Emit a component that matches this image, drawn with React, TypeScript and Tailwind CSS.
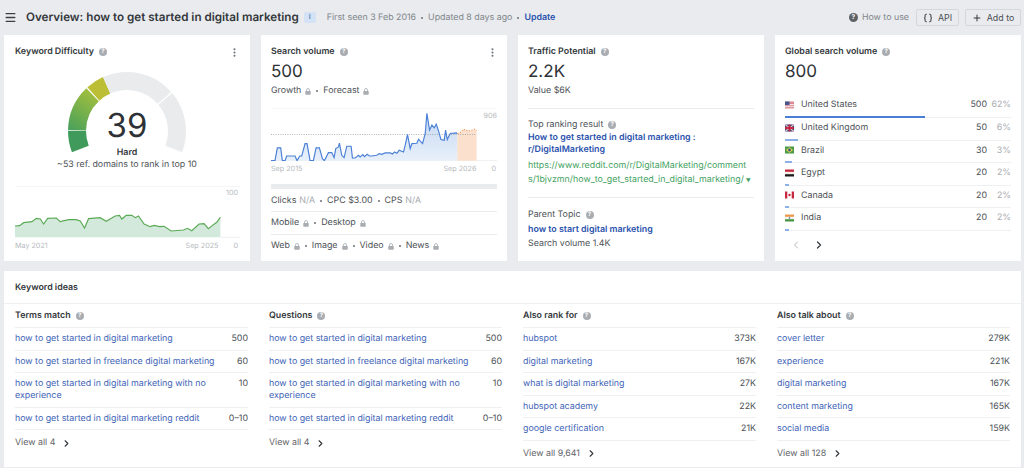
import { ChevronLeft, ChevronRight, Menu, Plus, EllipsisVertical, Braces } from "lucide-react";

const font = { fontFamily: '"Inter", "Noto Sans", sans-serif' };

const kdLine =
  "44,679 58,678 70,669 95,666 108,656 120,658 130,673 142,656 168,655 180,666 205,660 228,660 240,664 253,685 265,657 300,654 318,665 345,649 358,647 365,658 378,647 395,647 405,654 415,649 432,673 450,681 462,677 478,681 492,680 513,694 550,691 562,686 575,693 597,673 612,672 625,687 640,675 650,668 661,653";

const volumeLine =
  "28,206 40,206 47,168 57,168 62,206 70,206 75,192 100,192 106,206 114,192 120,192 130,155 136,155 145,206 155,206 163,168 173,168 182,200 188,206 200,182 210,182 217,197 222,170 230,165 233,154 240,190 247,197 255,163 268,163 272,198 280,198 290,190 295,195 303,188 308,194 316,187 323,192 330,192 345,190 352,185 360,187 370,183 385,183 392,186 398,180 405,184 412,175 425,180 430,160 437,128 445,170 450,155 465,154 470,142 482,155 490,125 495,65 503,115 510,100 517,108 523,97 530,118 537,143 547,145 551,115 556,143 565,125 583,123 586,125";

const forecastLine = "586,125 595,122 605,112 615,116 625,117 638,112 644,116";

const termsRows = [
  { name: "how to get started in digital marketing", value: "500" },
  { name: "how to get started in freelance digital marketing", value: "60" },
  { name: "how to get started in digital marketing with no experience", value: "10" },
  { name: "how to get started in digital marketing reddit", value: "0–10" },
];

const columns = [
  { title: "Terms match", rows: termsRows, more: "View all 4" },
  { title: "Questions", rows: termsRows, more: "View all 4" },
  {
    title: "Also rank for",
    more: "View all 9,641",
    rows: [
      { name: "hubspot", value: "373K" },
      { name: "digital marketing", value: "167K" },
      { name: "what is digital marketing", value: "27K" },
      { name: "hubspot academy", value: "22K" },
      { name: "google certification", value: "21K" },
    ],
  },
  {
    title: "Also talk about",
    more: "View all 128",
    rows: [
      { name: "cover letter", value: "279K" },
      { name: "experience", value: "221K" },
      { name: "digital marketing", value: "167K" },
      { name: "content marketing", value: "165K" },
      { name: "social media", value: "159K" },
    ],
  },
];

function Flag({ code }: { code: string }) {
  return (
    <svg width="9" height="8" viewBox="0 0 9 8" className="shrink-0">
      {code === "us" && (
        <>
          <rect width="9" height="7" y="0.5" fill="#d98a94" />
          <rect width="9" height="1.2" y="3" fill="#f3e3e5" />
          <rect width="9" height="1" y="5.2" fill="#f3e3e5" />
          <rect width="4.5" height="3.5" y="0.5" fill="#47558f" />
        </>
      )}
      {code === "uk" && (
        <>
          <rect width="9" height="7" y="0.5" fill="#39437f" />
          <path d="M0 .5 9 7.5M9 .5 0 7.5" stroke="#e8c5cb" strokeWidth="1.2" />
          <path d="M4.5 .5V7.5M0 4H9" stroke="#c8283f" strokeWidth="1.8" />
        </>
      )}
      {code === "br" && (
        <>
          <rect width="9" height="7" y="0.5" fill="#4b9a48" />
          <path d="M4.5 1.2 8 4 4.5 6.8 1 4Z" fill="#e5d651" />
          <circle cx="4.5" cy="4" r="1.4" fill="#38508f" />
        </>
      )}
      {code === "eg" && (
        <>
          <rect width="9" height="2.4" y="0.5" fill="#c8283f" />
          <rect width="9" height="2.3" y="2.9" fill="#f7efe6" />
          <rect width="9" height="2.3" y="5.2" fill="#1c1c1c" />
        </>
      )}
      {code === "ca" && (
        <>
          <rect width="9" height="7" y="0.5" fill="#fff" />
          <rect width="2.3" height="7" y="0.5" fill="#c8283f" />
          <rect width="2.3" height="7" x="6.7" y="0.5" fill="#c8283f" />
          <circle cx="4.5" cy="4" r="1.2" fill="#c8283f" />
        </>
      )}
      {code === "in" && (
        <>
          <rect width="9" height="2.4" y="0.5" fill="#eb9a4c" />
          <rect width="9" height="2.3" y="2.9" fill="#f5f5f5" />
          <rect width="9" height="2.3" y="5.2" fill="#45963f" />
          <circle cx="4.5" cy="4" r="0.8" fill="#47558f" />
        </>
      )}
    </svg>
  );
}

const countries = [
  { code: "us", name: "United States", volume: "500", share: "62%", bar: "w-[140px]", barColor: "bg-[#4a7fd6]" },
  { code: "uk", name: "United Kingdom", volume: "50", share: "6%", bar: "w-[13px]", barColor: "bg-[#8db0e8]" },
  { code: "br", name: "Brazil", volume: "30", share: "3%", bar: "w-[7px]", barColor: "bg-[#8db0e8]" },
  { code: "eg", name: "Egypt", volume: "20", share: "2%", bar: "w-[4px]", barColor: "bg-[#8db0e8]" },
  { code: "ca", name: "Canada", volume: "20", share: "2%", bar: "w-[4px]", barColor: "bg-[#8db0e8]" },
  { code: "in", name: "India", volume: "20", share: "2%", bar: "w-[4px]", barColor: "bg-[#8db0e8]" },
];

function Help() {
  return (
    <span className="ml-[5px] inline-flex h-[8px] w-[8px] shrink-0 items-center justify-center rounded-full bg-[#a9adb2] text-[6px] font-bold leading-none text-white">
      ?
    </span>
  );
}

function Lock() {
  return (
    <svg width="6" height="7" viewBox="0 0 6 7" className="ml-[4px] inline-block shrink-0">
      <path d="M1.5 3V2a1.5 1.5 0 0 1 3 0v1" fill="none" stroke="#a9adb2" strokeWidth="0.8" />
      <rect x="0.3" y="3" width="5.4" height="3.7" rx="0.6" fill="#a9adb2" />
    </svg>
  );
}

function Dot() {
  return <span className="mx-[5px] h-[2px] w-[2px] shrink-0 rounded-full bg-[#6b7075]" />;
}

function CardTitle({ children, menu }: { children: string; menu?: boolean }) {
  return (
    <div className="flex h-[14px] items-center justify-between">
      <div className="flex items-center text-[8.85px] font-semibold text-[#33373b]">
        {children}
        <Help />
      </div>
      {menu && <EllipsisVertical size={11} className="mr-[-0.5px] text-[#6b7075]" strokeWidth={2.4} />}
    </div>
  );
}

function Gauge() {
  const point = (deg: number, r: number) => {
    const a = (deg * Math.PI) / 180;
    return `${127 - r * Math.cos(a)} ${131 - r * Math.sin(a)}`;
  };
  const arc = (from: number, to: number) => {
    const large = to - from > 180 ? 1 : 0;
    return `M${point(from, 59)} A59 59 0 ${large} 1 ${point(to, 59)} L${point(to, 41)} A41 41 0 ${large} 0 ${point(from, 41)} Z`;
  };
  return (
    <svg width="136" height="92" viewBox="59 68 136 92" className="block">
      <defs>
        <linearGradient id="kdGreen" x1="0" y1="1" x2="0.5" y2="0">
          <stop offset="0" stopColor="#46a05c" />
          <stop offset="1" stopColor="#9dbd3f" />
        </linearGradient>
      </defs>
      <path d={arc(-21, 0)} fill="#3f9a5c" />
      <path d={arc(0.8, 46.5)} fill="url(#kdGreen)" />
      <path d={arc(47.8, 66)} fill="#bcbf36" />
      <path d={arc(66, 138.5)} fill="#e9ebed" />
      <path d={arc(140, 201)} fill="#e9ebed" />
    </svg>
  );
}

function DifficultyCard() {
  return (
    <div className="relative flex flex-col bg-white px-[11px] pt-[10px]">
      <CardTitle menu>Keyword Difficulty</CardTitle>
      <div className="relative mt-[9px] flex h-[92px] justify-center">
        <Gauge />
        <span className="absolute left-0 right-0 top-[37px] text-center text-[33px] leading-[40px] text-[#2e3236]">39</span>
      </div>
      <div className="mt-[-13px] text-center text-[8.85px] font-semibold leading-[12px] text-[#33373b]">Hard</div>
      <div className="text-center text-[8.85px] leading-[12px] text-[#4b5055]">~53 ref. domains to rank in top 10</div>
      <div className="relative mt-[15px]">
        <svg width="225" height="52" viewBox="44 559 676 156" preserveAspectRatio="none" className="block">
          <line x1="44" x2="720" y1="560" y2="560" stroke="#eceef0" strokeWidth="2" />
          <line x1="661" x2="720" y1="713" y2="713" stroke="#e4e6e8" strokeWidth="2" />
          <polygon points={`44,713 ${kdLine} 661,713`} fill="#d3e9db" />
          <polyline points={kdLine} fill="none" stroke="#5aaa55" strokeWidth="3.5" />
        </svg>
        <span className="absolute right-[1px] top-[2px] text-[7.2px] leading-[10px] text-[#b6babe]">100</span>
      </div>
      <div className="mt-[3px] flex text-[7.2px] leading-[10px] text-[#b6babe]">
        <span>May 2021</span>
        <span className="ml-auto mr-[15px]">Sep 2025</span>
        <span className="mr-[1px]">0</span>
      </div>
    </div>
  );
}

function VolumeCard() {
  return (
    <div className="flex flex-col bg-white px-[10px] pt-[10px]">
      <CardTitle menu>Search volume</CardTitle>
      <div className="mt-[1px] text-[17px] leading-[24px] text-[#2e3236]">500</div>
      <div className="flex h-[14px] items-center text-[8.85px] text-[#4b5055]">
        Growth
        <Lock />
        <span className="mx-[5px] h-[2px] w-[2px] rounded-full bg-[#6b7075]" />
        Forecast
        <Lock />
      </div>
      <div className="relative mt-[10px]">
        <svg width="226" height="53" viewBox="28 49 677 158" preserveAspectRatio="none" className="block">
          <line x1="28" x2="705" y1="50" y2="50" stroke="#eceef0" strokeWidth="2" />
          <line x1="28" x2="705" y1="206" y2="206" stroke="#e4e6e8" strokeWidth="2" />
          <defs>
            <linearGradient id="volFill" x1="0" y1="0" x2="0" y2="1">
              <stop offset="0" stopColor="#c5d8f2" />
              <stop offset="1" stopColor="#e8f0fa" />
            </linearGradient>
          </defs>
          <polygon points={`28,206 ${volumeLine} 586,206`} fill="url(#volFill)" />
          <polygon points={`${forecastLine} 644,206 586,206`} fill="#fbe1cd" />
          <line x1="28" x2="644" y1="128" y2="128" stroke="#8a8f94" strokeWidth="2" strokeDasharray="3 4" />
          <polyline points={volumeLine} fill="none" stroke="#4a80d6" strokeWidth="3.5" />
          <polyline points={forecastLine} fill="none" stroke="#f0995a" strokeWidth="3" strokeDasharray="4 4" />
        </svg>
        <span className="absolute right-0 top-[3px] text-[7.2px] leading-[10px] text-[#b6babe]">906</span>
      </div>
      <div className="mt-[3px] flex text-[7.2px] leading-[10px] text-[#b6babe]">
        <span>Sep 2015</span>
        <span className="ml-auto mr-[15px]">Sep 2026</span>
        <span className="mr-[1px]">0</span>
      </div>
      <div className="mt-[10px] h-[5px] bg-[#e9ebed]" />
      <div className="flex h-[23px] items-center border-b border-[#e9ebed] pt-[1px] text-[8.85px] text-[#4b5055]">
        Clicks <span className="ml-[3px] text-[#a9adb2]">N/A</span>
        <Dot />
        CPC $3.00
        <Dot />
        CPS <span className="ml-[3px] text-[#a9adb2]">N/A</span>
      </div>
      <div className="flex h-[23px] items-center border-b border-[#e9ebed] text-[8.85px] text-[#4b5055]">
        Mobile
        <Lock />
        <Dot />
        Desktop
        <Lock />
      </div>
      <div className="flex h-[22px] items-center text-[8.85px] text-[#4b5055]">
        Web
        <Lock />
        <Dot />
        Image
        <Lock />
        <Dot />
        Video
        <Lock />
        <Dot />
        News
        <Lock />
      </div>
    </div>
  );
}

function TrafficCard() {
  return (
    <div className="flex flex-col bg-white px-[10px] pt-[10px]">
      <CardTitle>Traffic Potential</CardTitle>
      <div className="mt-[1px] text-[17px] leading-[24px] text-[#2e3236]">2.2K</div>
      <div className="h-[14px] text-[8.85px] leading-[14px] text-[#4b5055]">Value $6K</div>
      <div className="mt-[10px] border-t border-[#e9ebed] pt-[10px]">
        <div className="flex h-[12px] items-center text-[8.85px] text-[#4b5055]">
          Top ranking result
          <Help />
        </div>
        <div className="mt-[1px] text-[8.85px] font-semibold leading-[12px] text-[#2a52ad]">
          How to get started in digital marketing : r/DigitalMarketing
        </div>
        <div className="mt-[2.5px] whitespace-nowrap text-[8.85px] leading-[14px] text-[#3f9f5e]">
          https://www.reddit.com/r/DigitalMarketing/comment
          <br />
          s/1bjvzmn/how_to_get_started_in_digital_marketing/
          <span className="ml-[2px] text-[5px] text-[#3f9f5e]">▼</span>
        </div>
      </div>
      <div className="mt-[9.5px] border-t border-[#e9ebed] pt-[11px]">
        <div className="flex h-[12px] items-center text-[8.85px] text-[#4b5055]">
          Parent Topic
          <Help />
        </div>
        <div className="mt-[3px] text-[8.85px] font-semibold leading-[12px] text-[#2a52ad]">how to start digital marketing</div>
        <div className="mt-[2px] text-[8.85px] leading-[12px] text-[#4b5055]">Search volume 1.4K</div>
      </div>
    </div>
  );
}

function GlobalCard() {
  return (
    <div className="flex flex-col bg-white px-[10px] pt-[10px]">
      <CardTitle>Global search volume</CardTitle>
      <div className="mt-[1px] text-[17px] leading-[24px] text-[#2e3236]">800</div>
      <div className="mt-[11.5px]">
        {countries.map((c) => (
          <div key={c.code} className="relative h-[22.6px] border-b border-[#eef0f2] pb-[3px]">
            <div className="flex h-[19px] items-center text-[8.85px] text-[#4b5055]">
              <Flag code={c.code} />
              <span className="ml-[7px]">{c.name}</span>
              <span className="ml-auto">{c.volume}</span>
              <span className="w-[24px] text-right text-[#a9adb2]">{c.share}</span>
            </div>
            <div className={`absolute bottom-[-1px] left-0 h-[2px] ${c.bar} ${c.barColor}`} />
          </div>
        ))}
      </div>
      <div className="mt-[8px] flex items-center pl-[5px]">
        <ChevronLeft size={12} className="text-[#b6babe]" strokeWidth={2} />
        <ChevronRight size={12} className="ml-[11px] text-[#33373b]" strokeWidth={2.4} />
      </div>
    </div>
  );
}

export default function App() {
  return (
    <div style={font} className="h-[468px] w-[1024px] overflow-hidden bg-[#e9ebee] [text-rendering:geometricPrecision]">
      <header className="flex h-[35px] items-center pl-[4px] pr-[3px]">
        <Menu size={13} className="text-[#3c4045]" strokeWidth={2.4} />
        <h1 className="ml-[9px] text-[11.65px] font-semibold text-[#33373b]">Overview: how to get started in digital marketing</h1>
        <span className="ml-[5px] flex h-[11px] w-[12px] items-center justify-center rounded-[2px] bg-[#d3e2f5] text-[7px] font-bold text-[#6a8fc4]">I</span>
        <span className="ml-[11px] text-[8.85px] text-[#80858a]">First seen 3 Feb 2016</span>
        <span className="mx-[5px] h-[2px] w-[2px] rounded-full bg-[#6b7075]" />
        <span className="text-[8.85px] text-[#80858a]">Updated 8 days ago</span>
        <span className="mx-[5px] h-[2px] w-[2px] rounded-full bg-[#6b7075]" />
        <span className="text-[8.85px] font-semibold text-[#2a52ad]">Update</span>
        <div className="ml-auto flex items-center">
          <span className="flex h-[9px] w-[9px] items-center justify-center rounded-full bg-[#5f6368] text-[6.5px] font-bold text-white">?</span>
          <span className="ml-[4px] text-[8.85px] text-[#80858a]">How to use</span>
          <button className="ml-[7px] flex h-[17px] w-[43px] items-center justify-center rounded-[2px] border border-[#d5d8db] text-[8.85px] text-[#4b5055]">
            <Braces size={10} className="mr-[5px] text-[#33373b]" strokeWidth={2.4} />
            API
          </button>
          <button className="ml-[6px] flex h-[17px] w-[56px] items-center justify-center rounded-[2px] border border-[#d5d8db] text-[8.85px] text-[#4b5055]">
            <Plus size={10} className="mr-[5px] text-[#33373b]" strokeWidth={2.4} />
            Add to
          </button>
        </div>
      </header>

      <div className="grid h-[226px] grid-cols-4 gap-[11px] pl-[4px] pr-[3px]">
        <DifficultyCard />
        <VolumeCard />
        <TrafficCard />
        <GlobalCard />
      </div>

      <section className="ml-[4px] mr-[3px] mt-[10px] h-[196px] bg-white">
        <div className="flex h-[33px] items-center border-b border-[#eef0f2] px-[11px] pt-[1px] text-[8.85px] font-semibold text-[#33373b]">Keyword ideas</div>
        <div className="grid grid-cols-4 gap-[21px] px-[11px]">
          {columns.map((col) => (
            <div key={col.title}>
              <div className="flex h-[23px] items-center text-[8.85px] font-semibold text-[#33373b]">
                {col.title}
                <Help />
              </div>
              {col.rows.map((row, i) => (
                <div key={i} className="flex justify-between gap-[14px] border-t border-[#eef0f2] pb-[4.5px] pt-[5px] text-[8.85px] leading-[12px]">
                  <span className="text-[#3e63b6]">{row.name}</span>
                  <span className="whitespace-nowrap text-[#4b5055]">{row.value}</span>
                </div>
              ))}
              <div className="flex h-[27px] items-center border-t border-[#eef0f2] text-[8.85px] text-[#5f6368]">
                {col.more}
                <ChevronRight size={11} className="ml-[6px] text-[#33373b]" strokeWidth={2.4} />
              </div>
            </div>
          ))}
        </div>
      </section>
    </div>
  );
}
